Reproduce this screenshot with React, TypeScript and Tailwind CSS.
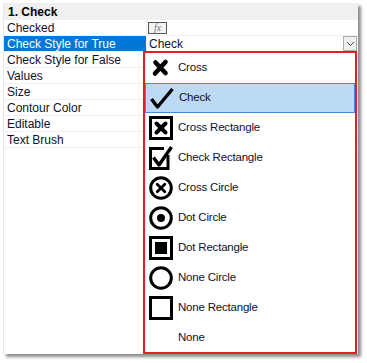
const rows = [
  "Checked",
  "Check Style for True",
  "Check Style for False",
  "Values",
  "Size",
  "Contour Color",
  "Editable",
  "Text Brush",
];

type Kind =
  | "cross"
  | "check"
  | "crossRect"
  | "checkRect"
  | "crossCircle"
  | "dotCircle"
  | "dotRect"
  | "noneCircle"
  | "noneRect"
  | "none";

const items: { label: string; kind: Kind }[] = [
  { label: "Cross", kind: "cross" },
  { label: "Check", kind: "check" },
  { label: "Cross Rectangle", kind: "crossRect" },
  { label: "Check Rectangle", kind: "checkRect" },
  { label: "Cross Circle", kind: "crossCircle" },
  { label: "Dot Circle", kind: "dotCircle" },
  { label: "Dot Rectangle", kind: "dotRect" },
  { label: "None Circle", kind: "noneCircle" },
  { label: "None Rectangle", kind: "noneRect" },
  { label: "None", kind: "none" },
];

function StyleIcon({ kind }: { kind: Kind }) {
  const x = (
    <path
      d="M7.5 7.5 L16.5 16.5 M16.5 7.5 L7.5 16.5"
      stroke="black"
      strokeWidth={4}
      strokeLinecap="round"
    />
  );
  return (
    <svg width="24" height="24" viewBox="0 0 24 24" fill="none">
      {kind === "cross" && (
        <path
          d="M6.5 6.5 L16.5 17 M16.5 6 L6 17.5"
          stroke="black"
          strokeWidth={4.6}
          strokeLinecap="round"
        />
      )}
      {kind === "check" && (
        <path
          d="M1.5 13 L7.5 21 L22.5 3"
          stroke="black"
          strokeWidth={3.4}
          strokeLinejoin="round"
        />
      )}
      {kind === "crossRect" && (
        <>
          <rect x="1.5" y="1.5" width="21" height="21" stroke="black" strokeWidth={3} />
          {x}
        </>
      )}
      {kind === "checkRect" && (
        <>
          <path d="M19 9 V22.5 H1.5 V2.5 H15" stroke="black" strokeWidth={3} />
          <path
            d="M4.5 11.5 L10 19 L22.5 1"
            stroke="black"
            strokeWidth={3.4}
            strokeLinejoin="round"
          />
        </>
      )}
      {kind === "crossCircle" && (
        <>
          <circle cx="12" cy="12" r="10.3" stroke="black" strokeWidth={3} />
          <path
            d="M8.2 8.2 L15.8 15.8 M15.8 8.2 L8.2 15.8"
            stroke="black"
            strokeWidth={2.8}
            strokeLinecap="round"
          />
        </>
      )}
      {kind === "dotCircle" && (
        <>
          <circle cx="12" cy="12" r="10.3" stroke="black" strokeWidth={3} />
          <circle cx="12" cy="12" r="4" fill="black" />
        </>
      )}
      {kind === "dotRect" && (
        <>
          <rect x="1.5" y="1.5" width="21" height="21" stroke="black" strokeWidth={3} />
          <rect x="6" y="6" width="12" height="12" fill="black" />
        </>
      )}
      {kind === "noneCircle" && (
        <circle cx="12" cy="12" r="10.3" stroke="black" strokeWidth={3} />
      )}
      {kind === "noneRect" && (
        <rect x="1.5" y="1.5" width="21" height="21" stroke="black" strokeWidth={3} />
      )}
    </svg>
  );
}

export default function App() {
  return (
    <div className="w-[367px] h-[363px] bg-white pl-[3px] pt-[3px] font-['Liberation_Sans',Arial,sans-serif]">
      <div className="relative w-[355px] h-[351px] bg-white shadow-[3px_3px_3px_rgba(0,0,0,0.45)] border-l border-[#e6e6e6]">
        <div className="h-[17px] bg-[#f0f0f0] pl-[4px] flex items-center text-[12px] font-bold text-black">
          1. Check
        </div>
        <div className="flex flex-col">
          {rows.map((r, i) => (
            <div key={r} className="flex h-[16px] border-b border-[#f0f0f0]">
              <div
                className={`w-[142px] pl-[3px] flex items-center text-[12px] leading-none ${
                  i === 1 ? "bg-[#0078d7] text-white" : "text-[#101030]"
                }`}
              >
                {r}
              </div>
              <div className="flex-1 border-l border-[#f0f0f0] flex items-center pl-[1px]">
                {i === 0 && (
                  <div className="h-[12px] w-[19px] border border-[#555] bg-[#f4f4f4] flex items-center justify-center text-[10px] italic text-[#777] font-['Liberation_Serif',serif] leading-none">
                    fx
                  </div>
                )}
                {i === 1 && (
                  <div className="flex-1 flex items-center justify-between h-full">
                    <span className="text-[12px] text-[#101030] pl-[1px]">Check</span>
                    <div className="h-[15px] w-[14px] mr-[1px] border border-[#adadad] bg-[#f0f0f0] flex items-center justify-center">
                      <svg width="9" height="6" viewBox="0 0 9 6" fill="none">
                        <path d="M1 1 L4.5 4.5 L8 1" stroke="#444" strokeWidth={1} />
                      </svg>
                    </div>
                  </div>
                )}
              </div>
            </div>
          ))}
        </div>

        <div className="absolute left-[139px] top-[48px] w-[214px] h-[303px] overflow-hidden border-2 border-[#e81c24] bg-white flex flex-col">
          {items.map((it) => (
            <div
              key={it.label}
              className={`h-[30px] shrink-0 flex items-center gap-[5px] pl-[4px] text-[11.5px] text-[#101028] tracking-[-0.2px] ${
                it.kind === "check"
                  ? "bg-[#bcdaf4] border border-[#3d8ee0] pl-[3px]"
                  : ""
              }`}
            >
              <div className="w-[24px] h-[24px] flex items-center justify-center">
                <StyleIcon kind={it.kind} />
              </div>
              <span>{it.label}</span>
            </div>
          ))}
        </div>
      </div>
    </div>
  );
}
